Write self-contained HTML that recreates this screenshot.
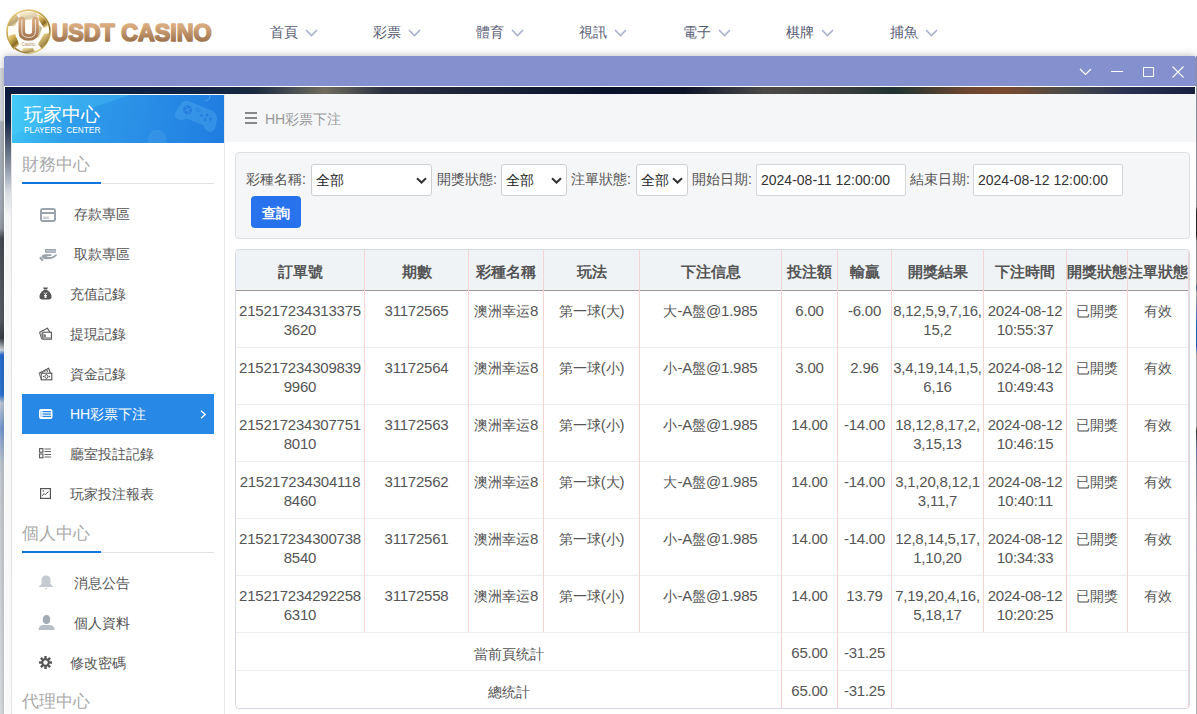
<!DOCTYPE html>
<html><head><meta charset="utf-8">
<style>
*{box-sizing:border-box;margin:0;padding:0}
html,body{width:1197px;height:714px;overflow:hidden;background:#fff;font-family:"Liberation Sans",sans-serif;color:#555;position:relative}
.abs{position:absolute}
#logotxt{left:50px;top:15px;font-weight:bold;font-size:23.6px;letter-spacing:-0.2px;color:#c08d62;background:linear-gradient(#dcae80,#a97a4f);-webkit-background-clip:text;background-clip:text;-webkit-text-fill-color:transparent;line-height:30px;white-space:nowrap}
.nav{top:22px;font-size:14px;line-height:20px;color:#585c73;white-space:nowrap}
.nav svg{position:absolute;left:35px;top:7px}
#modal{left:4px;top:56px;width:1192px;height:680px;box-shadow:0 0 8px rgba(0,0,0,.3);background:#fff}
#title{left:4px;top:56px;width:1192px;height:30px;background:#8591cf;border-radius:2px 2px 0 0}
#strip{left:5px;top:87px;width:1190px;height:7px;background:linear-gradient(90deg,#0b1a3c 0,#0e2244 180px,#1a2a40 250px,#6f6c5e 320px,#2a3040 380px,#07122a 600px,#0d1428 680px,#4b4a48 760px,#3d3d3d 830px,#1f3330 890px,#6b4530 960px,#7a4a30 1000px,#4a4a45 1060px,#2a3250 1120px,#182040 1190px)}
#frame{left:11px;top:94px;width:1185px;height:620px;background:#fff}
#side{left:11px;top:94px;width:214px;height:620px;border-left:1px solid #e3e3e3;border-right:1px solid #e6e9ec;background:#fff}
#shead{left:12px;top:95px;width:212px;height:48px;background:linear-gradient(100deg,#3cc6f4 0%,#2e9eeb 28%,#2a8fe7 60%,#1f7ce0 100%);overflow:hidden}
.sect{left:22px;font-size:17px;line-height:22px;color:#a9a9a9;width:192px;height:30px;border-bottom:1px solid #e2e2e2;white-space:nowrap}
.sect i{position:absolute;left:0;bottom:-1px;width:79px;height:2px;background:#0f76e0}
.item{left:22px;width:192px;height:40px;font-size:14px;line-height:40px;color:#555;white-space:nowrap}
.item svg{position:absolute}
.item span{position:absolute;top:0}
.item.on{background:#2888e6;color:#fff}
#crumb{left:225px;top:94px;width:971px;height:48px;background:#f5f6f8}
#filter{left:235px;top:152px;width:955px;height:87px;background:#f5f6f8;border:1px solid #dde0e4;border-radius:4px}
.lbl{font-size:14px;line-height:20px;color:#555;top:169px;white-space:nowrap}
.sel{top:164px;height:32px;background:#fff;border:1px solid #cfcfcf;border-radius:3px;font-size:14px;line-height:30px;color:#222;padding-left:4px;white-space:nowrap}
.sel svg{position:absolute;top:12px}
#btn{left:251px;top:196px;width:50px;height:32px;background:#2872ee;border-radius:4px;color:#fff;font-size:14px;font-weight:bold;line-height:34px;text-align:center}
#tbl{left:235px;top:249px;width:955px;height:460px;border:1px solid #d5dae0;border-radius:4px;background:#fff}
#thead{left:236px;top:250px;width:953px;height:41px;background:#eff3f6;border-bottom:1px solid #9e9494;border-radius:3px 3px 0 0}
.hl{left:236px;width:953px;height:1px;background:#ececec}
.vl{top:250px;width:1px;height:382px;background:#f3d3d3}
.th{top:251px;height:40px;font-size:15px;font-weight:bold;line-height:41px;text-align:center;color:#555;white-space:nowrap}
.td{font-size:15px;letter-spacing:-0.22px;line-height:19px;padding-top:10px;text-align:center;color:#555;white-space:nowrap}
.sumt{padding-top:2px;line-height:38px}
.td .c{font-size:13.8px;letter-spacing:0}

</style></head><body>
<svg class="abs" style="left:4px;top:6px" width="52" height="52" viewBox="0 0 52 52">
 <defs>
  <linearGradient id="gold" x1="0" y1="0" x2="0.6" y2="1"><stop offset="0" stop-color="#f2e2a8"/><stop offset=".35" stop-color="#d6b45a"/><stop offset=".75" stop-color="#8a6a22"/><stop offset="1" stop-color="#e6cf80"/></linearGradient>
  <linearGradient id="tan" x1="0" y1="0" x2="0" y2="1"><stop offset="0" stop-color="#d9ab80"/><stop offset="1" stop-color="#a47650"/></linearGradient>
 </defs>
 <circle cx="24.5" cy="25.6" r="21.5" fill="#fffdf6" stroke="url(#gold)" stroke-width="1.6"/>
 <g fill="url(#gold)">
  <path d="M17 6 L32 6 L34 10 L30 14 L19 14 L15 10 Z" opacity=".35"/>
  <path d="M34 8 Q42 12 44.5 20 L40 22 L35 14 Z"/>
  <path d="M4 20 Q6 12 12 8 L15 12 L11 20 Z" opacity=".6"/>
  <path d="M4 30 L11 28 L15 38 L10 44 Q5 38 4 30 Z"/>
  <path d="M40 28 L45.5 27 Q45 37 38 43 L34 38 Z" opacity=".8"/>
  <path d="M19 42 L29 42 L31 46.5 Q24.5 48 18 46.5 Z" opacity=".7"/>
  <path d="M31 14 L38 22 L35 32 L31 30 Z" opacity=".5"/>
 </g>
 <path d="M17.8 14 V25.5 Q17.8 31.5 24.6 31.5 Q31.4 31.5 31.4 25.5 V14" fill="none" stroke="url(#tan)" stroke-width="6.6" stroke-linecap="round"/>
 <path d="M17.8 14 V25.5 Q17.8 31.5 24.6 31.5 Q31.4 31.5 31.4 25.5 V14" fill="none" stroke="#fff" stroke-width="1" stroke-linecap="round" opacity=".75"/>
 <text x="24.5" y="39.5" font-family="Liberation Sans" font-size="4.5" text-anchor="middle" fill="#b89070">Casino</text>
</svg>
<svg class="abs" style="left:48px;top:14px" width="170" height="34" viewBox="0 0 170 34">
 <defs><linearGradient id="tan2" x1="0" y1="0" x2="0" y2="1"><stop offset="0.25" stop-color="#d8aa7e"/><stop offset="0.8" stop-color="#a07650"/></linearGradient></defs>
 <text x="3.5" y="27.2" font-family="Liberation Sans" font-weight="bold" font-size="24" textLength="160" lengthAdjust="spacingAndGlyphs" fill="url(#tan2)" stroke="url(#tan2)" stroke-width="1.7" stroke-linejoin="round">USDT CASINO</text>
</svg>

<div class="nav abs" style="left:270px">首頁<svg width="13" height="8" viewBox="0 0 13 8"><path d="M1 1 L6.5 6.5 L12 1" fill="none" stroke="#a8b1cd" stroke-width="1.6"/></svg></div>
<div class="nav abs" style="left:373px">彩票<svg width="13" height="8" viewBox="0 0 13 8"><path d="M1 1 L6.5 6.5 L12 1" fill="none" stroke="#a8b1cd" stroke-width="1.6"/></svg></div>
<div class="nav abs" style="left:476px">體育<svg width="13" height="8" viewBox="0 0 13 8"><path d="M1 1 L6.5 6.5 L12 1" fill="none" stroke="#a8b1cd" stroke-width="1.6"/></svg></div>
<div class="nav abs" style="left:579px">視訊<svg width="13" height="8" viewBox="0 0 13 8"><path d="M1 1 L6.5 6.5 L12 1" fill="none" stroke="#a8b1cd" stroke-width="1.6"/></svg></div>
<div class="nav abs" style="left:683px">電子<svg width="13" height="8" viewBox="0 0 13 8"><path d="M1 1 L6.5 6.5 L12 1" fill="none" stroke="#a8b1cd" stroke-width="1.6"/></svg></div>
<div class="nav abs" style="left:786px">棋牌<svg width="13" height="8" viewBox="0 0 13 8"><path d="M1 1 L6.5 6.5 L12 1" fill="none" stroke="#a8b1cd" stroke-width="1.6"/></svg></div>
<div class="nav abs" style="left:890px">捕魚<svg width="13" height="8" viewBox="0 0 13 8"><path d="M1 1 L6.5 6.5 L12 1" fill="none" stroke="#a8b1cd" stroke-width="1.6"/></svg></div>
<div class="abs" style="left:0;top:68px;width:4px;height:646px;background:linear-gradient(180deg,#dde0e4 0,#dde0e4 52px,#b2b9c3 54px,#a8b0bc 140px,#9aa0aa 160px,#4a4f58 170px,#5a5f68 250px,#3a3f48 270px,#e0e4ea 282px,#2a70d8 287px,#3078d8 327px,#c8d4e4 335px,#7aa0d8 360px,#c8d0dc 395px,#d0d4da 420px,#e2e5e9 646px)"></div>
<div class="abs" style="left:1196px;top:56px;width:1px;height:658px;background:linear-gradient(180deg,#9aa5b8 0,#a0a8b8 150px,#2a2a2a 155px,#2a2a2a 180px,#a0a4aa 185px,#a0a4aa 228px,#2a6ad0 232px,#c0c4ca 236px,#2a6ad0 270px,#2a6ad0 290px,#c0c4ca 300px,#c0c4ca 370px,#333 375px,#6a8ac0 390px,#b8c0cc 450px,#c8ccd2 658px)"></div>

<div id="modal" class="abs"></div>
<div id="title" class="abs"></div>
<svg class="abs" style="left:1079px;top:68px" width="13" height="8" viewBox="0 0 13 8"><path d="M1 1 L6.5 6.5 L12 1" fill="none" stroke="#fff" stroke-width="1.2"/></svg>
<div class="abs" style="left:1111px;top:71px;width:12px;height:1px;background:#fff"></div>
<div class="abs" style="left:1143px;top:67px;width:11px;height:10px;border:1px solid #fff"></div>
<svg class="abs" style="left:1172px;top:66px" width="12" height="12" viewBox="0 0 12 12"><path d="M0.5 0.5 L11.5 11.5 M11.5 0.5 L0.5 11.5" fill="none" stroke="#fff" stroke-width="1.1"/></svg>
<div id="strip" class="abs"></div>
<div class="abs" style="left:5px;top:87px;width:6px;height:627px;background:linear-gradient(180deg,#0a1a3a 0,#142648 35px,#5a6478 60px,#9aa2b2 85px,#d8dce2 105px,#f5f6f7 130px,#fafafa 627px)"></div>
<div id="frame" class="abs"></div>

<div id="side" class="abs"></div>
<div id="shead" class="abs">
 <svg class="abs" style="left:0;top:0" width="212" height="48" viewBox="0 0 212 48">
  <path d="M0 0 L118 0 L0 40 Z" fill="#5fe0ff" opacity="0.22"/>
  <g transform="translate(36 4) scale(0.8) rotate(22 188 20)">
   <path d="M163 14 Q166 8 175 9 L199 9 Q208 8 211 16 L213 26 Q214 34 207 34 Q202 34 199 29 L176 29 Q172 34 167 34 Q160 34 161 26 Z" fill="#4aa8ee" opacity="0.45" stroke="#7cc4f4" stroke-width="0.8" stroke-opacity="0.5"/>
   <circle cx="173" cy="19" r="5.5" fill="#1f74dc" opacity="0.7"/>
   <path d="M170 16 L176 22 M176 16 L170 22" stroke="#4aa8ee" stroke-width="1.2" opacity="0.7"/>
   <g fill="#1f74dc" opacity="0.6"><circle cx="198" cy="16" r="2"/><circle cx="204" cy="19" r="2"/><circle cx="198" cy="22" r="2"/><circle cx="192" cy="19" r="2"/></g>
   <path d="M182 13 L188 13 M183 16 L189 16" stroke="#1f74dc" stroke-width="1.3" opacity="0.5"/>
  </g>
  <path d="M193 6 Q200 4 197 0" stroke="#7cc4f4" stroke-width="0.9" fill="none" opacity="0.5"/>
  <circle cx="145" cy="44" r="8.5" fill="#3f9ae8" opacity="0.5" stroke="#6ab8f2" stroke-width="0.8" stroke-opacity="0.5"/>
 </svg>
 <div class="abs" style="left:12px;top:8px;font-size:19px;line-height:24px;color:#fff;white-space:nowrap">玩家中心</div>
 <div class="abs" style="left:12px;top:29px;font-size:8.3px;font-weight:normal;letter-spacing:0;line-height:12px;color:#fff;white-space:nowrap">PLAYERS&nbsp; CENTER</div>
</div>
<div class="sect abs" style="top:154px">財務中心<i></i></div>
<div class="item abs" style="top:194px"><span style="left:52px">存款專區</span></div>
<svg class="abs" style="left:40px;top:208px" width="16" height="14" viewBox="0 0 16 14"><rect x="1" y="1" width="14" height="12" rx="2" fill="none" stroke="#9aa3ab" stroke-width="2"/><rect x="1" y="4" width="14" height="2" fill="#9aa3ab"/><path d="M4 8.5 V11 M6 8.5 V11 M8 8.5 V11" stroke="#9aa3ab" stroke-width="1"/></svg>
<div class="item abs" style="top:234px"><span style="left:52px">取款專區</span></div>
<svg class="abs" style="left:36px;top:246px" width="24" height="18" viewBox="0 0 24 18"><rect x="9" y="3" width="10.8" height="3.8" fill="#9aa3ab"/><rect x="10" y="4.2" width="8.8" height="1.4" fill="#c3c9cf"/><path d="M4 11.3 L6.8 14.8" stroke="#9aa3ab" stroke-width="2.2"/><path d="M5.2 10.2 Q6.8 8.3 9 8.2 L15.2 8.2 Q16 9.2 14.8 10 L11 10.2 L11.3 11 L15.5 11 L20.3 8.3 Q21.2 8.6 20.6 9.8 Q18 12.6 14.5 13 L9.2 13.2 Q7.8 13 7 12.4 Z" fill="#9aa3ab"/></svg>
<div class="item abs" style="top:274px"><span style="left:48px">充值記錄</span></div>
<svg class="abs" style="left:39px;top:287px" width="13" height="13" viewBox="0 0 13 13"><path d="M4 0.5 L9 0.5 L8 2.5 L5 2.5 Z" fill="#555"/><path d="M5 3 L8 3 Q13 6 12.5 10.5 Q12 12.5 10 12.5 L3 12.5 Q1 12.5 0.5 10.5 Q0 6 5 3 Z" fill="#555"/><path d="M5 5.5 L6.5 7.5 L8 5.5 M6.5 7.5 V11 M5 8.5 H8 M5 10 H8" stroke="#fff" stroke-width="0.9" fill="none"/></svg>
<div class="item abs" style="top:314px"><span style="left:48px">提現記錄</span></div>
<svg class="abs" style="left:36px;top:325px" width="20" height="18" viewBox="0 0 20 18"><path d="M3.5 7.3 L11.5 3.2 L13.8 7.2" fill="none" stroke="#555" stroke-width="1.1"/><path d="M3.5 7.3 L5.8 14.2" stroke="#555" stroke-width="1"/><path d="M4.8 7.3 L6.2 12" stroke="#777" stroke-width="0.8"/><rect x="6.8" y="7.2" width="8.6" height="7" fill="none" stroke="#555" stroke-width="1.1"/><rect x="7.6" y="9.4" width="2.2" height="2.6" fill="#777"/><rect x="7" y="12.2" width="8.2" height="1.6" fill="#999"/></svg>
<div class="item abs" style="top:354px"><span style="left:48px">資金記錄</span></div>
<svg class="abs" style="left:36px;top:365px" width="20" height="18" viewBox="0 0 20 18"><path d="M3 8.2 L12.6 3.3 L14.4 8.2" fill="none" stroke="#555" stroke-width="1.1"/><path d="M6 7.6 L12 4.9" stroke="#777" stroke-width="0.9"/><circle cx="11.5" cy="6.3" r="0.7" fill="#666"/><path d="M3 8.2 L5.2 14" stroke="#666" stroke-width="0.9"/><rect x="5.2" y="8.2" width="10.6" height="6.6" fill="none" stroke="#555" stroke-width="1.1"/><ellipse cx="10.4" cy="11.5" rx="1.5" ry="1.9" fill="none" stroke="#555" stroke-width="1"/><circle cx="7.5" cy="11.5" r="0.7" fill="#555"/><circle cx="13.3" cy="11.5" r="0.7" fill="#555"/></svg>
<div class="item abs on" style="top:394px"><span style="left:48px">HH彩票下注</span></div>
<svg class="abs" style="left:39px;top:409px" width="14" height="10" viewBox="0 0 14 10"><rect x="0" y="0" width="13.5" height="10" rx="2" fill="#fff"/><rect x="3.5" y="2" width="8.5" height="1.3" fill="#2888e6"/><rect x="3.5" y="4.4" width="8.5" height="1.3" fill="#2888e6"/><rect x="3.5" y="6.8" width="8.5" height="1.3" fill="#2888e6"/><rect x="1.5" y="2" width="1" height="6" fill="#2888e6" opacity=".5"/></svg>
<svg class="abs" style="left:200px;top:410px" width="7" height="9" viewBox="0 0 7 9"><path d="M1 0.8 L5.2 4.5 L1 8.2" fill="none" stroke="#fff" stroke-width="1.3"/></svg>
<div class="item abs" style="top:434px"><span style="left:48px">廳室投註記錄</span></div>
<svg class="abs" style="left:39px;top:448px" width="13" height="11" viewBox="0 0 13 11"><rect x="0.6" y="0.6" width="3.3" height="3.6" fill="none" stroke="#555" stroke-width="1.1"/><rect x="0.6" y="6" width="3.3" height="3.8" fill="none" stroke="#555" stroke-width="1.1"/><path d="M5.5 1 H12 M5.5 3.5 H12 M5.5 6.5 H12 M5.5 9 H12" stroke="#666" stroke-width="1"/></svg>
<div class="item abs" style="top:474px"><span style="left:48px">玩家投注報表</span></div>
<svg class="abs" style="left:40px;top:488px" width="11" height="11" viewBox="0 0 11 11"><rect x="0.6" y="0.6" width="9.8" height="9.8" fill="none" stroke="#555" stroke-width="1.2"/><path d="M2.3 7.8 L4 5.5 L5.3 6.8 L8.5 3.5" fill="none" stroke="#555" stroke-width="1"/><circle cx="3.3" cy="3" r="0.8" fill="#555"/></svg>
<div class="sect abs" style="top:523px">個人中心<i></i></div>
<div class="item abs" style="top:563px"><span style="left:52px">消息公告</span></div>
<svg class="abs" style="left:38px;top:575px" width="16" height="15" viewBox="0 0 16 15"><path d="M8 0.5 Q12.5 0.5 12.5 5.5 L12.5 9 L15.5 12 L0.5 12 L3.5 9 L3.5 5.5 Q3.5 0.5 8 0.5 Z" fill="#c5cad0"/><path d="M6.5 13 L9.5 13 L8 14.5 Z" fill="#c5cad0"/></svg>
<div class="item abs" style="top:603px"><span style="left:52px">個人資料</span></div>
<svg class="abs" style="left:38px;top:615px" width="17" height="15" viewBox="0 0 17 15"><ellipse cx="8.5" cy="4.5" rx="3.7" ry="4.5" fill="#a3acb5"/><path d="M0.5 15 Q0.5 10.5 5 10 L12 10 Q16.5 10.5 16.5 15 Z" fill="#b8bfc6"/></svg>
<div class="item abs" style="top:643px"><span style="left:48px">修改密碼</span></div>
<svg class="abs" style="left:39px;top:656px" width="13" height="13" viewBox="0 0 13 13"><g fill="#555"><circle cx="6.5" cy="6.5" r="4.2"/><rect x="5.3" y="0" width="2.4" height="13"/><rect x="0" y="5.3" width="13" height="2.4"/><rect x="5.3" y="0" width="2.4" height="13" transform="rotate(45 6.5 6.5)"/><rect x="5.3" y="0" width="2.4" height="13" transform="rotate(-45 6.5 6.5)"/></g><circle cx="6.5" cy="6.5" r="2.2" fill="#fff"/></svg>
<div class="sect abs" style="top:691px;border:0">代理中心</div>

<div id="crumb" class="abs"></div>
<div class="abs" style="left:245px;top:112px;width:12px;height:12px;border-top:2px solid #888;border-bottom:2px solid #888"><div style="margin-top:3px;height:2px;background:#888"></div></div>
<div class="abs" style="left:265px;top:109px;font-size:14px;line-height:20px;color:#999;white-space:nowrap">HH彩票下注</div>
<div id="filter" class="abs"></div>
<div class="lbl abs" style="left:246px">彩種名稱:</div>
<div class="sel abs" style="left:311px;width:121px">全部<svg style="position:absolute;right:4px;top:12px" width="11" height="7" viewBox="0 0 11 7"><path d="M1 1.2 L5.5 5.5 L10 1.2" fill="none" stroke="#333" stroke-width="2"/></svg></div>
<div class="lbl abs" style="left:437px">開獎狀態:</div>
<div class="sel abs" style="left:501px;width:66px">全部<svg style="position:absolute;right:4px;top:12px" width="11" height="7" viewBox="0 0 11 7"><path d="M1 1.2 L5.5 5.5 L10 1.2" fill="none" stroke="#333" stroke-width="2"/></svg></div>
<div class="lbl abs" style="left:571px">注單狀態:</div>
<div class="sel abs" style="left:636px;width:52px">全部<svg style="position:absolute;right:4px;top:12px" width="11" height="7" viewBox="0 0 11 7"><path d="M1 1.2 L5.5 5.5 L10 1.2" fill="none" stroke="#333" stroke-width="2"/></svg></div>
<div class="lbl abs" style="left:692px">開始日期:</div>
<div class="sel abs" style="left:756px;width:150px;color:#333;border-radius:2px;border-color:#d6d6d6">2024-08-11 12:00:00</div>
<div class="lbl abs" style="left:910px">結束日期:</div>
<div class="sel abs" style="left:973px;width:150px;color:#333;border-radius:2px;border-color:#d6d6d6">2024-08-12 12:00:00</div>
<div id="btn" class="abs">查詢</div>

<div id="tbl" class="abs"></div><div id="thead" class="abs"></div>
<div class="hl abs" style="top:347px"></div>
<div class="hl abs" style="top:404px"></div>
<div class="hl abs" style="top:461px"></div>
<div class="hl abs" style="top:518px"></div>
<div class="hl abs" style="top:575px"></div>
<div class="hl abs" style="top:632px"></div>
<div class="hl abs" style="top:670px"></div>
<div class="vl abs" style="left:364px"></div>
<div class="vl abs" style="left:468px"></div>
<div class="vl abs" style="left:543px"></div>
<div class="vl abs" style="left:639px"></div>
<div class="vl abs" style="left:781px;height:458px"></div>
<div class="vl abs" style="left:837px;height:458px"></div>
<div class="vl abs" style="left:891px;height:458px"></div>
<div class="vl abs" style="left:983px"></div>
<div class="vl abs" style="left:1066px"></div>
<div class="vl abs" style="left:1127px"></div>
<div class="vl abs" style="left:1188px;height:458px"></div>
<div class="th abs" style="left:236px;width:128px">訂單號</div>
<div class="th abs" style="left:365px;width:103px">期數</div>
<div class="th abs" style="left:469px;width:74px">彩種名稱</div>
<div class="th abs" style="left:544px;width:95px">玩法</div>
<div class="th abs" style="left:640px;width:141px">下注信息</div>
<div class="th abs" style="left:782px;width:55px">投注額</div>
<div class="th abs" style="left:838px;width:53px">輸贏</div>
<div class="th abs" style="left:892px;width:91px">開獎結果</div>
<div class="th abs" style="left:984px;width:82px">下注時間</div>
<div class="th abs" style="left:1067px;width:60px">開獎狀態</div>
<div class="th abs" style="left:1128px;width:60px">注單狀態</div>
<div class="td abs" style="left:236px;top:291px;width:128px">215217234313375<br>3620</div>
<div class="td abs" style="left:365px;top:291px;width:103px">31172565</div>
<div class="td abs" style="left:469px;top:291px;width:74px"><span class="c">澳洲幸运</span>8</div>
<div class="td abs" style="left:544px;top:291px;width:95px"><span class="c">第一球</span>(<span class="c">大</span>)</div>
<div class="td abs" style="left:640px;top:291px;width:141px"><span class="c">大</span>-A<span class="c">盤</span>@1.985</div>
<div class="td abs" style="left:782px;top:291px;width:55px">6.00</div>
<div class="td abs" style="left:838px;top:291px;width:53px">-6.00</div>
<div class="td abs" style="left:892px;top:291px;width:91px">8,12,5,9,7,16,<br>15,2</div>
<div class="td abs" style="left:984px;top:291px;width:82px">2024-08-12<br>10:55:37</div>
<div class="td abs" style="left:1067px;top:291px;width:60px"><span class="c">已開獎</span></div>
<div class="td abs" style="left:1128px;top:291px;width:60px"><span class="c">有效</span></div>
<div class="td abs" style="left:236px;top:348px;width:128px">215217234309839<br>9960</div>
<div class="td abs" style="left:365px;top:348px;width:103px">31172564</div>
<div class="td abs" style="left:469px;top:348px;width:74px"><span class="c">澳洲幸运</span>8</div>
<div class="td abs" style="left:544px;top:348px;width:95px"><span class="c">第一球</span>(<span class="c">小</span>)</div>
<div class="td abs" style="left:640px;top:348px;width:141px"><span class="c">小</span>-A<span class="c">盤</span>@1.985</div>
<div class="td abs" style="left:782px;top:348px;width:55px">3.00</div>
<div class="td abs" style="left:838px;top:348px;width:53px">2.96</div>
<div class="td abs" style="left:892px;top:348px;width:91px">3,4,19,14,1,5,<br>6,16</div>
<div class="td abs" style="left:984px;top:348px;width:82px">2024-08-12<br>10:49:43</div>
<div class="td abs" style="left:1067px;top:348px;width:60px"><span class="c">已開獎</span></div>
<div class="td abs" style="left:1128px;top:348px;width:60px"><span class="c">有效</span></div>
<div class="td abs" style="left:236px;top:405px;width:128px">215217234307751<br>8010</div>
<div class="td abs" style="left:365px;top:405px;width:103px">31172563</div>
<div class="td abs" style="left:469px;top:405px;width:74px"><span class="c">澳洲幸运</span>8</div>
<div class="td abs" style="left:544px;top:405px;width:95px"><span class="c">第一球</span>(<span class="c">小</span>)</div>
<div class="td abs" style="left:640px;top:405px;width:141px"><span class="c">小</span>-A<span class="c">盤</span>@1.985</div>
<div class="td abs" style="left:782px;top:405px;width:55px">14.00</div>
<div class="td abs" style="left:838px;top:405px;width:53px">-14.00</div>
<div class="td abs" style="left:892px;top:405px;width:91px">18,12,8,17,2,<br>3,15,13</div>
<div class="td abs" style="left:984px;top:405px;width:82px">2024-08-12<br>10:46:15</div>
<div class="td abs" style="left:1067px;top:405px;width:60px"><span class="c">已開獎</span></div>
<div class="td abs" style="left:1128px;top:405px;width:60px"><span class="c">有效</span></div>
<div class="td abs" style="left:236px;top:462px;width:128px">215217234304118<br>8460</div>
<div class="td abs" style="left:365px;top:462px;width:103px">31172562</div>
<div class="td abs" style="left:469px;top:462px;width:74px"><span class="c">澳洲幸运</span>8</div>
<div class="td abs" style="left:544px;top:462px;width:95px"><span class="c">第一球</span>(<span class="c">大</span>)</div>
<div class="td abs" style="left:640px;top:462px;width:141px"><span class="c">大</span>-A<span class="c">盤</span>@1.985</div>
<div class="td abs" style="left:782px;top:462px;width:55px">14.00</div>
<div class="td abs" style="left:838px;top:462px;width:53px">-14.00</div>
<div class="td abs" style="left:892px;top:462px;width:91px">3,1,20,8,12,1<br>3,11,7</div>
<div class="td abs" style="left:984px;top:462px;width:82px">2024-08-12<br>10:40:11</div>
<div class="td abs" style="left:1067px;top:462px;width:60px"><span class="c">已開獎</span></div>
<div class="td abs" style="left:1128px;top:462px;width:60px"><span class="c">有效</span></div>
<div class="td abs" style="left:236px;top:519px;width:128px">215217234300738<br>8540</div>
<div class="td abs" style="left:365px;top:519px;width:103px">31172561</div>
<div class="td abs" style="left:469px;top:519px;width:74px"><span class="c">澳洲幸运</span>8</div>
<div class="td abs" style="left:544px;top:519px;width:95px"><span class="c">第一球</span>(<span class="c">小</span>)</div>
<div class="td abs" style="left:640px;top:519px;width:141px"><span class="c">小</span>-A<span class="c">盤</span>@1.985</div>
<div class="td abs" style="left:782px;top:519px;width:55px">14.00</div>
<div class="td abs" style="left:838px;top:519px;width:53px">-14.00</div>
<div class="td abs" style="left:892px;top:519px;width:91px">12,8,14,5,17,<br>1,10,20</div>
<div class="td abs" style="left:984px;top:519px;width:82px">2024-08-12<br>10:34:33</div>
<div class="td abs" style="left:1067px;top:519px;width:60px"><span class="c">已開獎</span></div>
<div class="td abs" style="left:1128px;top:519px;width:60px"><span class="c">有效</span></div>
<div class="td abs" style="left:236px;top:576px;width:128px">215217234292258<br>6310</div>
<div class="td abs" style="left:365px;top:576px;width:103px">31172558</div>
<div class="td abs" style="left:469px;top:576px;width:74px"><span class="c">澳洲幸运</span>8</div>
<div class="td abs" style="left:544px;top:576px;width:95px"><span class="c">第一球</span>(<span class="c">小</span>)</div>
<div class="td abs" style="left:640px;top:576px;width:141px"><span class="c">小</span>-A<span class="c">盤</span>@1.985</div>
<div class="td abs" style="left:782px;top:576px;width:55px">14.00</div>
<div class="td abs" style="left:838px;top:576px;width:53px">13.79</div>
<div class="td abs" style="left:892px;top:576px;width:91px">7,19,20,4,16,<br>5,18,17</div>
<div class="td abs" style="left:984px;top:576px;width:82px">2024-08-12<br>10:20:25</div>
<div class="td abs" style="left:1067px;top:576px;width:60px"><span class="c">已開獎</span></div>
<div class="td abs" style="left:1128px;top:576px;width:60px"><span class="c">有效</span></div>
<div class="td abs sumt" style="left:236px;top:633px;width:545px"><span class="c">當前頁统計</span></div>
<div class="td abs sumt" style="padding-top:0.5px;left:782px;top:633px;width:55px">65.00</div>
<div class="td abs sumt" style="padding-top:0.5px;left:838px;top:633px;width:53px">-31.25</div>
<div class="td abs sumt" style="left:236px;top:671px;width:545px"><span class="c">總统計</span></div>
<div class="td abs sumt" style="padding-top:0.5px;left:782px;top:671px;width:55px">65.00</div>
<div class="td abs sumt" style="padding-top:0.5px;left:838px;top:671px;width:53px">-31.25</div>
</body></html>
